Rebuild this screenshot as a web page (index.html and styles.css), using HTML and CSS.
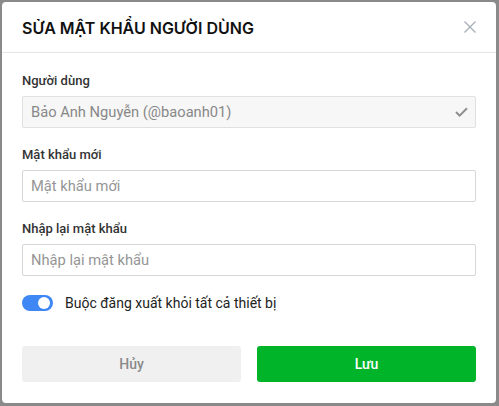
FILE: index.html
```html
<!DOCTYPE html>
<html lang="vi">
<head>
<meta charset="utf-8">
<link rel="stylesheet" href="styles.css">
</head>
<body>
<div class="modal">
  <div class="modal-header">
    <h2 class="modal-title">SỬA MẬT KHẨU NGƯỜI DÙNG</h2>
    <button class="close-btn" aria-label="Đóng">
      <svg width="12" height="12" viewBox="0 0 12 12"><path d="M0.5 0.5 L11.5 11.5 M11.5 0.5 L0.5 11.5" stroke="#a9b0b8" stroke-width="1.4" fill="none"/></svg>
    </button>
  </div>
  <div class="modal-body">
    <div class="field">
      <label class="field-label">Người dùng</label>
      <div class="input input-disabled">
        <span>Bảo Anh Nguyễn (@baoanh01)</span>
        <svg class="check" width="13" height="10" viewBox="0 0 13 10"><path d="M1 5 L4.6 8.6 L12 1.2" stroke="#8f8f8f" stroke-width="2" fill="none"/></svg>
      </div>
    </div>
    <div class="field">
      <label class="field-label">Mật khẩu mới</label>
      <div class="input"><span class="placeholder">Mật khẩu mới</span></div>
    </div>
    <div class="field">
      <label class="field-label">Nhập lại mật khẩu</label>
      <div class="input"><span class="placeholder">Nhập lại mật khẩu</span></div>
    </div>
    <div class="toggle-row">
      <span class="toggle"><span class="knob"></span></span>
      <span class="toggle-text">Buộc đăng xuất khỏi tất cả thiết bị</span>
    </div>
  </div>
  <div class="modal-footer">
    <button class="btn btn-cancel">Hủy</button>
    <button class="btn btn-save">Lưu</button>
  </div>
</div>
</body>
</html>
```

FILE: styles.css
```css
* { box-sizing: border-box; }
html, body { margin: 0; padding: 0; }
body {
  width: 499px;
  height: 406px;
  overflow: hidden;
  background: #8a8a8a;
  font-family: Roboto, "Noto Sans", sans-serif;
  padding: 2px 3px 0 2px;
}
.modal {
  width: 494px;
  height: 401px;
  background: #fff;
  border-radius: 4px;
  display: flex;
  flex-direction: column;
}
.modal-header {
  height: 51px;
  border-bottom: 1px solid #e6e6e6;
  display: flex;
  align-items: center;
  justify-content: space-between;
  padding: 0 20px;
}
.modal-title {
  margin: 0;
  font-family: Inter, "Noto Sans", sans-serif;
  font-size: 16px;
  font-weight: 600;
  color: #111;
  padding-top: 1px;
}
.close-btn {
  border: 0;
  background: none;
  padding: 0;
  width: 12px;
  height: 12px;
  display: flex;
}
.modal-body {
  padding: 18px 20px 0;
  display: flex;
  flex-direction: column;
  gap: 17px;
}
.field { display: flex; flex-direction: column; gap: 5px; }
.field-label {
  font-size: 13px;
  line-height: 20px;
  font-weight: 500;
  color: #333;
}
.input {
  height: 32px;
  border: 1px solid #d6d6d6;
  border-radius: 2px;
  padding: 0 8px;
  display: flex;
  align-items: center;
  justify-content: space-between;
  font-size: 14.7px;
  color: #888;
}
.input-disabled { background: #f7f7f7; border-color: #e0e0e0; }
.placeholder { color: #959595; }
.check { margin-right: -1px; }
.toggle-row {
  display: flex;
  align-items: center;
  gap: 12px;
  height: 20px;
}
.toggle {
  width: 31px;
  height: 16px;
  border-radius: 8px;
  background: #3f87f5;
  display: flex;
  align-items: center;
  justify-content: flex-end;
  padding: 0 3px;
}
.knob {
  width: 12px;
  height: 12px;
  border-radius: 50%;
  background: #fff;
}
.toggle-text { font-size: 14px; color: #222; }
.modal-footer {
  margin-top: auto;
  padding: 0 20px 21px;
  display: flex;
  gap: 16px;
}
.btn {
  flex: 1;
  height: 36px;
  border: 0;
  border-radius: 3px;
  font-family: Roboto, "Noto Sans", sans-serif;
  font-size: 14px;
  font-weight: 500;
}
.btn-cancel { background: #f0f0f0; color: #8a8a8a; }
.btn-save { background: #00b42a; color: #fff; }
```
